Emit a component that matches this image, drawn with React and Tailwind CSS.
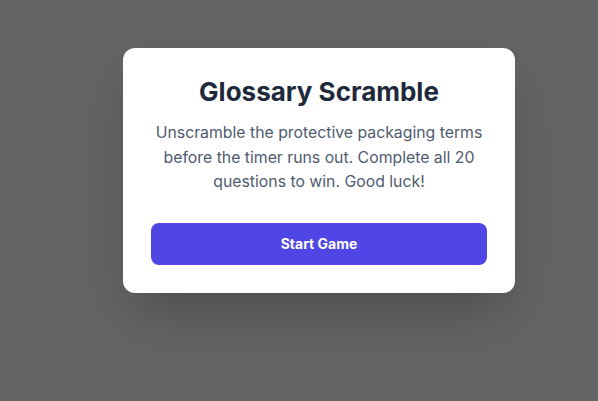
export default function App() {
  return (
    <div className="min-h-[401px] w-full bg-[#636466] pt-[48px] pl-[123px]" style={{ fontFamily: "Inter, 'Noto Sans', sans-serif" }}>
      <div className="w-[392px] rounded-xl bg-white p-7 text-center shadow-2xl">
        <h1 className="text-[26px] font-bold text-[#1e293b] leading-8">Glossary Scramble</h1>
        <p className="mt-[13px] text-[15.8px] leading-[24.5px] text-[#4f5b6f]">
          Unscramble the protective packaging terms before the timer runs out. Complete all 20 questions to win. Good luck!
        </p>
        <button className="mt-[28px] flex h-[42px] w-full items-center justify-center rounded-lg bg-[#4f46e5] text-sm font-bold text-white">
          Start Game
        </button>
      </div>
    </div>
  );
}
